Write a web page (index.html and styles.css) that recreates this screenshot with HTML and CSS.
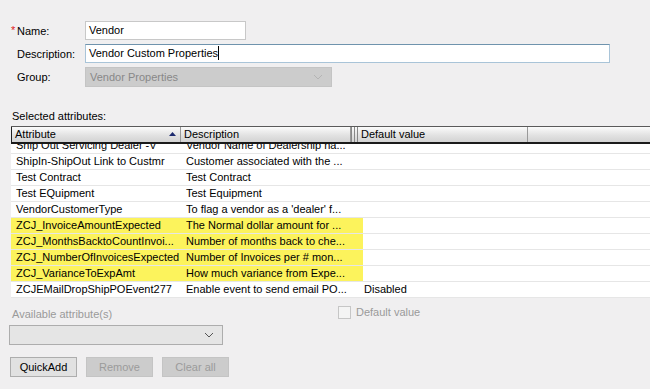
FILE: index.html
```html
<!DOCTYPE html>
<html lang="en">
<head>
  <meta charset="UTF-8">
  <title>Custom Properties</title>
  <link rel="stylesheet" href="styles.css">
</head>
<body>
  <div class="form">
    <div class="field">
      <label class="field-label"><span class="req">*</span>Name:</label>
      <div class="textbox name-box">Vendor</div>
    </div>
    <div class="field">
      <label class="field-label">Description:</label>
      <div class="textbox desc-box focused">Vendor Custom Properties<span class="caret"></span></div>
    </div>
    <div class="field">
      <label class="field-label">Group:</label>
      <div class="combo group-box disabled">
        <span>Vendor Properties</span>
        <svg class="chev" width="10" height="6" viewBox="0 0 10 6"><path d="M1 1l4 4 4-4" fill="none" stroke="#b4b4b4" stroke-width="1"/></svg>
      </div>
    </div>
  </div>

  <p class="section-label">Selected attributes:</p>

  <div class="grid">
    <div class="grid-head">
      <div class="hcell col-attr sorted">Attribute
        <svg class="sort" width="7" height="4" viewBox="0 0 7 4"><path d="M0 4L3.5 0 7 4z" fill="#1c2a6e"/></svg>
      </div>
      <div class="hcell col-desc">Description</div>
      <div class="hcell col-grip"></div>
      <div class="hcell col-def">Default value</div>
      <div class="hcell col-rest"></div>
    </div>
    <div class="grid-body">
      <div class="grid-rows">
        <div class="row"><div class="col-attr">Ship Out Servicing Dealer -V</div><div class="col-desc">Vendor Name of Dealership ha...</div><div class="col-grip"></div><div class="col-def"></div></div>
        <div class="row"><div class="col-attr">ShipIn-ShipOut Link to Custmr</div><div class="col-desc">Customer associated with the ...</div><div class="col-grip"></div><div class="col-def"></div></div>
        <div class="row"><div class="col-attr">Test Contract</div><div class="col-desc">Test Contract</div><div class="col-grip"></div><div class="col-def"></div></div>
        <div class="row"><div class="col-attr">Test EQuipment</div><div class="col-desc">Test Equipment</div><div class="col-grip"></div><div class="col-def"></div></div>
        <div class="row"><div class="col-attr">VendorCustomerType</div><div class="col-desc">To flag a vendor as a 'dealer' f...</div><div class="col-grip"></div><div class="col-def"></div></div>
        <div class="row marked"><div class="col-attr">ZCJ_InvoiceAmountExpected</div><div class="col-desc">The Normal dollar amount for ...</div><div class="col-grip"></div><div class="col-def"></div></div>
        <div class="row marked"><div class="col-attr">ZCJ_MonthsBacktoCountInvoi...</div><div class="col-desc">Number of months back to che...</div><div class="col-grip"></div><div class="col-def"></div></div>
        <div class="row marked"><div class="col-attr">ZCJ_NumberOfInvoicesExpected</div><div class="col-desc">Number of Invoices per # mon...</div><div class="col-grip"></div><div class="col-def"></div></div>
        <div class="row marked"><div class="col-attr">ZCJ_VarianceToExpAmt</div><div class="col-desc">How much variance from Expe...</div><div class="col-grip"></div><div class="col-def"></div></div>
        <div class="row"><div class="col-attr">ZCJEMailDropShipPOEvent277</div><div class="col-desc">Enable event to send email PO...</div><div class="col-grip"></div><div class="col-def">Disabled</div></div>
      </div>
    </div>
  </div>

  <div class="lower">
    <div class="avail">
      <div class="muted">Available attribute(s)</div>
      <div class="combo avail-box">
        <svg class="chev" width="10" height="6" viewBox="0 0 10 6"><path d="M1 1l4 4 4-4" fill="none" stroke="#555" stroke-width="1"/></svg>
      </div>
    </div>
    <label class="check muted"><span class="box"></span>Default value</label>
  </div>

  <div class="buttons">
    <button class="btn">QuickAdd</button>
    <button class="btn" disabled>Remove</button>
    <button class="btn" disabled>Clear all</button>
  </div>
</body>
</html>
```

FILE: styles.css
```css
body {
  margin: 0;
  width: 650px;
  height: 389px;
  overflow: hidden;
  background: #f0eff0;
  font-family: "Liberation Sans", Arial, sans-serif;
  font-size: 11px;
  line-height: 14px;
  color: #000;
}
.form {
  padding-top: 21px;
}
.field {
  display: flex;
  align-items: center;
  margin-bottom: 4px;
}
.field-label {
  width: 68px;
  padding-left: 17px;
  position: relative;
}
.req {
  position: absolute;
  left: 11px;
  top: -1px;
  color: #e0201a;
}
.textbox {
  box-sizing: border-box;
  height: 19px;
  line-height: 17px;
  padding-left: 3px;
  background: #fff;
  border: 1px solid #c8c8c8;
  white-space: nowrap;
}
.name-box {
  width: 161px;
}
.desc-box {
  width: 525px;
}
.focused {
  border-color: #a9c4d8;
  border-top-color: #6f93ad;
}
.caret {
  display: inline-block;
  width: 1px;
  height: 14px;
  background: #000;
  vertical-align: -3px;
}
.combo {
  box-sizing: border-box;
  display: flex;
  align-items: center;
  justify-content: space-between;
  height: 20px;
  padding: 0 8px 0 4px;
}
.group-box {
  width: 247px;
  background: #cccccc;
  border: 1px solid #c4c4c4;
  color: #888;
}
.section-label {
  margin: 22px 0 3px 12px;
}
.grid {
  margin-left: 11px;
  width: 660px;
}
.grid-head {
  display: flex;
  height: 15px;
  border-top: 1px solid #5a5a5a;
  border-bottom: 2px solid #1a1a1a;
  background: linear-gradient(#fbfbfb, #e2e2e2 55%, #d3d3d3);
}
.hcell {
  box-sizing: border-box;
  line-height: 15px;
  padding-left: 3px;
  border-right: 1px solid #999;
  white-space: nowrap;
  position: relative;
}
.sorted {
  border-left: 1px solid #222;
}
.sort {
  position: absolute;
  right: 4px;
  top: 5px;
}
.col-attr,
.col-desc,
.col-def {
  box-sizing: border-box;
  width: 170px;
  flex: none;
  overflow: hidden;
}
.col-grip {
  box-sizing: border-box;
  width: 7px;
  flex: none;
}
.hcell.col-grip {
  padding: 0;
  border-left: 1px solid #888;
  border-right: 1px solid #888;
  background: linear-gradient(to right, transparent 2px, #888 2px, #888 3px, transparent 3px);
}
.col-rest {
  flex: 1;
  border-right: none;
}
.grid-body {
  height: 154px;
  overflow: hidden;
  background: #fff;
}
.grid-rows {
  margin-top: -6px;
}
.row {
  display: flex;
  height: 16px;
  line-height: 15px;
  border-bottom: 1px solid #e6e6e6;
  box-sizing: border-box;
  white-space: nowrap;
}
.row .col-attr {
  padding-left: 5px;
}
.row .col-desc {
  padding-left: 5px;
}
.row .col-def {
  padding-left: 6px;
}
.marked .col-attr,
.marked .col-desc,
.marked .col-grip {
  background: #fcf35c;
}
.marked .col-def {
  background: linear-gradient(to right, #fcf35c 5px, transparent 5px);
}
.lower {
  display: flex;
  align-items: flex-start;
  margin-top: 7px;
}
.muted {
  color: #9a9a9a;
}
.avail {
  margin-left: 12px;
  width: 326px;
  padding-top: 2px;
}
.avail-box {
  margin: 4px 0 0 -3px;
  width: 214px;
  background: #e5e5e5;
  border: 1px solid #adadad;
  justify-content: flex-end;
}
.check {
  display: flex;
  align-items: center;
  gap: 5px;
}
.box {
  width: 11px;
  height: 11px;
  border: 1px solid #c6c6c6;
  background: #f4f4f4;
}
.buttons {
  display: flex;
  gap: 9px;
  margin: 12px 0 0 10px;
}
.btn {
  box-sizing: border-box;
  width: 67px;
  height: 20px;
  padding: 0;
  font: inherit;
  color: #000;
  background: #e1e1e1;
  border: 1px solid #adadad;
}
.btn:disabled {
  color: #9b9b9b;
  background: #cccccc;
  border-color: #c4c4c4;
}
```
